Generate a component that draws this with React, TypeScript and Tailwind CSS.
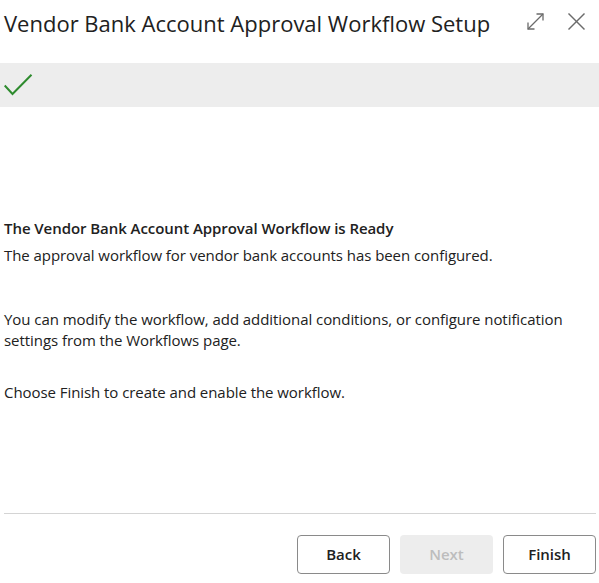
import React from "react";

export default function App() {
  return (
    <div
      className="w-[599px] h-[583px] bg-white text-[#212121] flex flex-col overflow-hidden"
      style={{ fontFamily: '"Open Sans", "Noto Sans", sans-serif' }}
    >
      <div className="h-[63px] flex items-start pl-[4px] pr-[13px]">
        <h1 className="mt-[8px] text-[22px] leading-[30px] font-normal flex-1 whitespace-nowrap">
          Vendor Bank Account Approval Workflow Setup
        </h1>
        <div className="flex items-center gap-[22px] mt-[12px]">
          <svg width="19" height="19" viewBox="0 0 19 19" fill="none" stroke="#6b6b6b" strokeWidth="1.3">
            <path d="M2 17 L17 2" />
            <path d="M10.5 2 H17 V8.5" />
            <path d="M2 10.5 V17 H8.5" />
          </svg>
          <svg width="19" height="19" viewBox="0 0 19 19" fill="none" stroke="#6b6b6b" strokeWidth="1.5">
            <path d="M1.5 1.5 L17.5 17.5" />
            <path d="M17.5 1.5 L1.5 17.5" />
          </svg>
        </div>
      </div>
      <div className="h-[44px] bg-[#ededed] flex items-center pl-[4px]">
        <svg width="29" height="23" viewBox="0 0 29 23" fill="none" stroke="#2e8b2e" strokeWidth="2">
          <path d="M0.7 11.5 L8.5 20 L27.5 0.7" />
        </svg>
      </div>
      <div className="flex-1 pl-[4px] pr-[4px] pt-[111px] text-[15px] leading-[21px] tracking-[-0.06px]">
        <p className="font-semibold">The Vendor Bank Account Approval Workflow is Ready</p>
        <p className="mt-[6px]">The approval workflow for vendor bank accounts has been configured.</p>
        <p className="mt-[43px]">
          You can modify the workflow, add additional conditions, or configure notification settings from the Workflows page.
        </p>
        <p className="mt-[31px]">Choose Finish to create and enable the workflow.</p>
      </div>
      <div className="ml-[4px] mr-[3px] border-t border-[#d4d4d4]" />
      <div className="h-[69px] flex justify-end items-start gap-[10px] pt-[21px] pr-[3px]">
        <button className="w-[93px] h-[39px] rounded-[4px] border border-[#8a8a8a] bg-white text-[15px] font-semibold text-[#212121]">
          Back
        </button>
        <button className="w-[93px] h-[39px] rounded-[4px] bg-[#ededed] text-[15px] font-semibold text-[#bdbdbd]">
          Next
        </button>
        <button className="w-[93px] h-[39px] rounded-[4px] border border-[#8a8a8a] bg-white text-[15px] font-semibold text-[#212121]">
          Finish
        </button>
      </div>
    </div>
  );
}
